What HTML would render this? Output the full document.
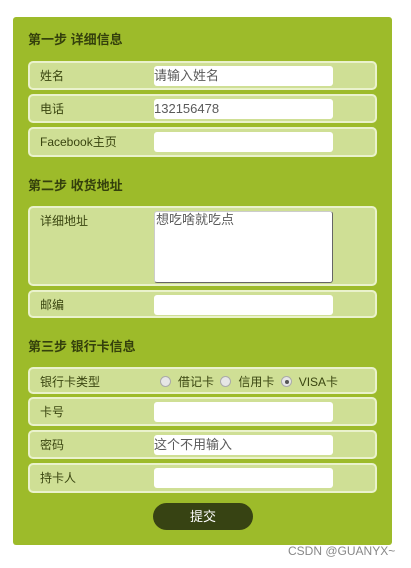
<!DOCTYPE html>
<html><head><meta charset="utf-8"><style>
*{box-sizing:border-box;margin:0;padding:0}
body{width:411px;height:568px;background:#fff;font-family:"Liberation Sans","Noto Sans CJK SC",sans-serif;font-size:12px;color:#3a4510;position:relative;overflow:hidden}
.panel{position:absolute;left:13px;top:17px;width:379px;height:528px;background:#9dbb2a;border-radius:3px}
.t{position:absolute;left:28px;font-weight:bold;font-size:13px;color:#34400c}
.row{position:absolute;left:28px;width:349px;background:#cfdf95;border:2px solid #eaf2cc;border-radius:5px}
.row span{position:absolute;left:10px;top:4px}
.in{position:absolute;left:124px;top:3px;width:179px;height:20px;background:#fff;border-radius:3px;font-size:13px;color:#5a5a5a;line-height:20px;white-space:nowrap}
.rad{display:inline-block;width:11px;height:11px;border-radius:50%;background:#e6e6e6;border:1px solid #aaa;vertical-align:-1px;margin-right:7px;position:relative}
.btn{position:absolute;left:153px;top:503px;width:100px;height:27px;background:#374313;border-radius:14px;color:#fff;font-size:13px;text-align:center;line-height:27px}
.wm{position:absolute;left:288px;top:544px;color:#888;font-size:12px}
</style></head><body>
<div class="panel"></div>
<div class="t" style="top:29px">第一步 详细信息</div>
<div class="row" style="top:61px;height:29px"><span>姓名</span><div class="in">请输入姓名</div></div>
<div class="row" style="top:94px;height:29px"><span>电话</span><div class="in">132156478</div></div>
<div class="row" style="top:127px;height:30px"><span>Facebook主页</span><div class="in"></div></div>
<div class="t" style="top:175px">第二步 收货地址</div>
<div class="row" style="top:206px;height:80px"><span>详细地址</span><div class="in" style="height:72px;border:1px solid #ccc;border-right-color:#666;border-bottom-color:#666;line-height:16px;padding-left:1px">想吃啥就吃点</div></div>
<div class="row" style="top:290px;height:28px"><span>邮编</span><div class="in"></div></div>
<div class="t" style="top:336px">第三步 银行卡信息</div>
<div class="row" style="top:367px;height:27px"><span>银行卡类型</span><div style="position:absolute;left:130px;top:4px;white-space:nowrap"><i class="rad"></i>借记卡 <i class="rad" style="margin-left:3px"></i>信用卡 <i class="rad" style="margin-left:3px"><i style="position:absolute;left:3px;top:3px;width:4px;height:4px;border-radius:50%;background:#555"></i></i>VISA卡</div></div>
<div class="row" style="top:397px;height:29px"><span>卡号</span><div class="in"></div></div>
<div class="row" style="top:430px;height:29px"><span>密码</span><div class="in">这个不用输入</div></div>
<div class="row" style="top:463px;height:30px"><span>持卡人</span><div class="in"></div></div>
<div class="btn">提交</div>
<div class="wm">CSDN @GUANYX~</div>
</body></html>
